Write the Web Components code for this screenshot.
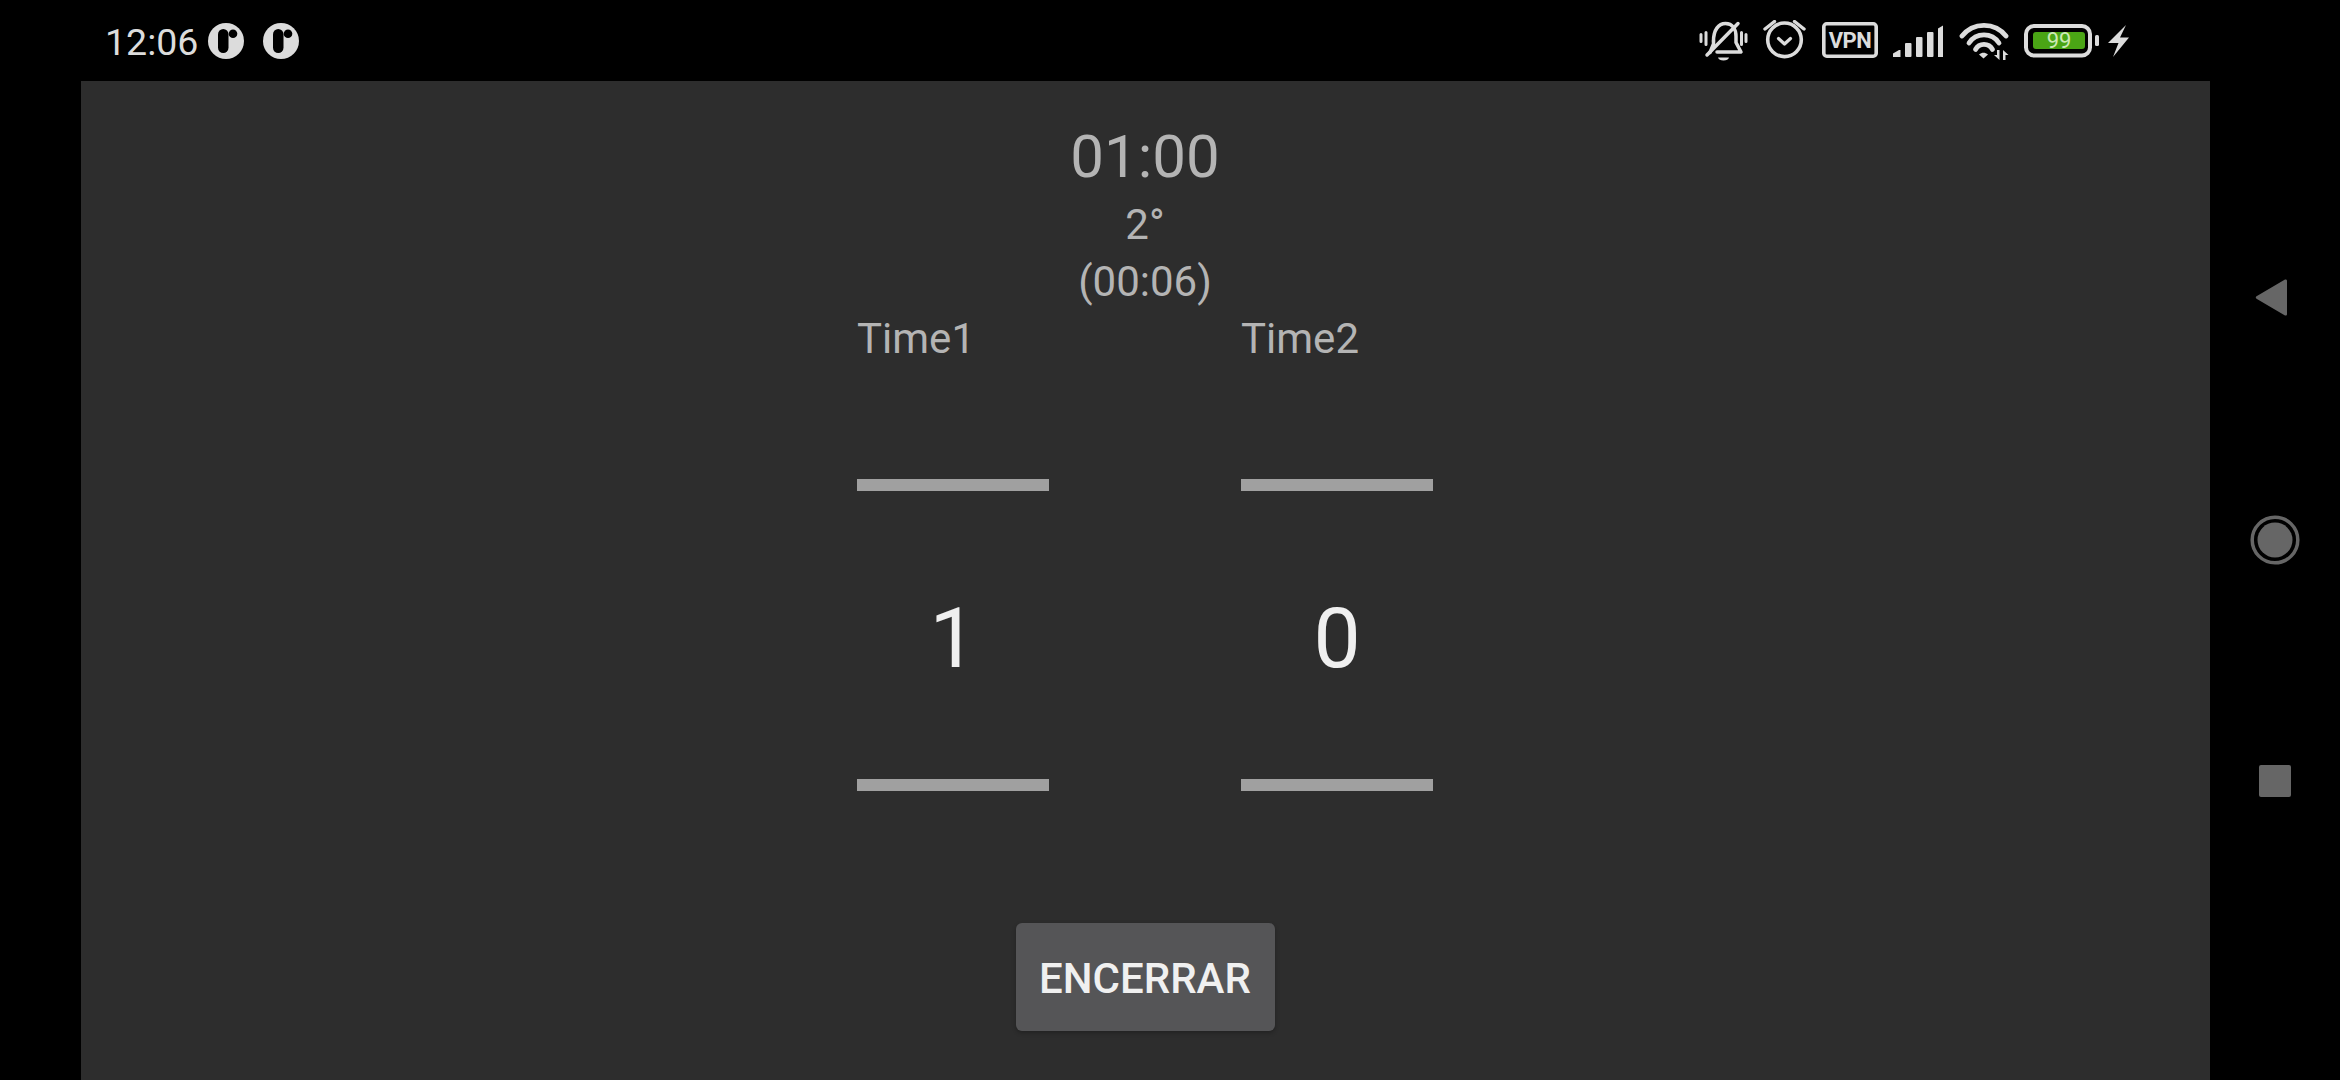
<!DOCTYPE html>
<html lang="pt">
<head>
<meta charset="utf-8">
<title>Placar</title>
<style>
  html, body { margin: 0; height: 100%; background: #000; overflow: hidden; }
  body { font-family: Roboto, "Liberation Sans", sans-serif; }
</style>
</head>
<body>
<phone-screen>
  <status-bar slot="top" time="12:06"></status-bar>
  <score-panel>
    <match-clock slot="clock" time="01:00" period="2°" elapsed="(00:06)"></match-clock>
    <team-score slot="teams" name="Time1" score="1"></team-score>
    <team-score slot="teams" name="Time2" score="0"></team-score>
    <action-button slot="action">ENCERRAR</action-button>
  </score-panel>
  <nav-rail slot="nav"></nav-rail>
</phone-screen>

<script>
(() => {
  class PhoneScreen extends HTMLElement {
    constructor() {
      super();
      this.attachShadow({mode: 'open'}).innerHTML = `
        <style>
          :host { display: flex; flex-direction: column; height: 1080px; width: 2340px; background: #000; }
          .body { flex: 1; display: flex; min-height: 0; padding-left: 81px; }
        </style>
        <slot name="top"></slot>
        <div class="body"><slot></slot><slot name="nav"></slot></div>`;
    }
  }

  class AppBadge extends HTMLElement {
    constructor() {
      super();
      this.attachShadow({mode: 'open'}).innerHTML = `
        <style>:host { display: block; width: 36px; height: 36px; } svg { display: block; }</style>
        <svg width="36" height="36" viewBox="0 0 36 36">
          <circle cx="18" cy="18" r="18" fill="#dcdcdc"/>
          <rect x="10" y="6" width="10.500" height="24" rx="5.250" fill="#000"/>
          <circle cx="25" cy="10.800" r="4.300" fill="#000"/>
        </svg>`;
    }
  }

  class StatusBar extends HTMLElement {
    constructor() {
      super();
      const t = this.getAttribute('time') || '';
      this.attachShadow({mode: 'open'}).innerHTML = `
        <style>
          :host { display: flex; justify-content: space-between; height: 81px; flex: none;
                  padding: 0 211px 0 105px; box-sizing: border-box; color: #dcdcdc; }
          .left { display: flex; align-items: flex-start; padding-top: 23px; }
          .time { font-size: 37.500px; line-height: 36px; width: 91px; margin-right: 12px; margin-top: 1px; white-space: nowrap; }
          app-badge + app-badge { margin-left: 19px; }
          .right { display: flex; align-items: flex-start; padding-top: 20px; }
          svg { display: block; height: 42px; margin-left: 15.5px; fill: none; stroke: #dcdcdc; }
          svg:first-child { margin-left: 0; }
          svg text { font-family: Roboto, "Liberation Sans", sans-serif; stroke: none; text-anchor: middle; }
        </style>
        <div class="left"><span class="time">${t}</span><app-badge></app-badge><app-badge></app-badge></div>
        <div class="right">
          <svg width="49" viewBox="1698 20 49 42" stroke-width="3.500" stroke-linecap="round" stroke-linejoin="round">
            <path d="M1700 34.500v7M1705 32.500v12M1745 34.500v7M1740.500 32.500v12" stroke-width="3"/>
            <path d="M1712.500 41c0-11 5-17.500 12-17.500 7 0 10.500 5.500 10.500 13v6l5 9.500h-24"/>
            <path d="M1712.500 41v3l-3.500 8.500"/>
            <path d="M1706 55l31-31.500"/>
            <path d="M1717 57.500h11c-.5 1.800-2.500 3-5.500 3s-5-1.200-5.500-3z" fill="#dcdcdc" stroke="none"/>
          </svg>
          <svg width="43" style="margin-left:15px" viewBox="1762 20 43 42" stroke-width="3.600" stroke-linecap="round" stroke-linejoin="round">
            <circle cx="1783.500" cy="39.800" r="16.800"/>
            <path d="M1777.500 38.500l6 5.500 6-5.500" stroke-width="3.200"/>
            <path d="M1764 29l9.500-7.500M1793.500 21.500l9.500 7.500" stroke-width="3.400"/>
          </svg>
          <svg width="56" viewBox="1821 20 56 42">
            <rect x="1822.800" y="23.800" width="52.400" height="32.400" rx="3" stroke-width="3.600"/>
            <text x="1849" y="48" font-size="22" font-weight="700" fill="#dcdcdc" letter-spacing="-.5">VPN</text>
          </svg>
          <svg width="50" viewBox="1893 20 50 42" style="fill:#dcdcdc;stroke:none">
            <path d="M1893 57v-3.500l6-3.500h1.500v7z"/>
            <rect x="1905" y="43" width="6.500" height="14" rx="1"/>
            <rect x="1916" y="37" width="6.500" height="20" rx="1"/>
            <rect x="1927" y="32" width="6.500" height="25" rx="1"/>
            <path d="M1938 28.500l6-3.500v32h-6z"/>
          </svg>
          <svg width="50" viewBox="1958 20 50 42" stroke-width="4.800" stroke-linecap="round">
            <path d="M1961 36A28 28 0 0 1 2005 36"/>
            <path d="M1968 43A18 18 0 0 1 1998 43"/>
            <path d="M1974.500 49.500A9.700 9.700 0 0 1 1991.500 49.500"/>
            <path d="M1978 54.500c3-2.500 6-2.500 9 0l-4.500 4z" fill="#dcdcdc" stroke="none" stroke-linejoin="round"/>
            <path d="M1998.500 50v10l-5.500-5h3v-5zM2002 50l5.500 5h-3v5h-2.500z" fill="#dcdcdc" stroke="none"/>
          </svg>
          <svg width="75" viewBox="2024 20 75 42">
            <rect x="2026" y="26" width="64" height="29.500" rx="8" stroke-width="4"/>
            <rect x="2033" y="32" width="52" height="17" rx="3" fill="#4aa515" stroke="none"/>
            <text x="2059" y="48" font-size="22" fill="#cdeab5">99</text>
            <rect x="2095" y="35" width="4" height="11" rx="1.500" fill="#dcdcdc" stroke="none"/>
          </svg>
          <svg width="21" style="margin-left:9px" viewBox="2108 20 21 42">
            <path d="M2126 25l-18 18h10.500l-5.500 14 16-19.500h-9z" fill="#dcdcdc" stroke="none"/>
          </svg>
        </div>`;
    }
  }

  class MatchClock extends HTMLElement {
    constructor() {
      super();
      const attr = n => this.getAttribute(n) || '';
      this.attachShadow({mode: 'open'}).innerHTML = `
        <style>
          :host { display: flex; flex-direction: column; align-items: center; color: #b4b4b4; padding-top: 36px; }
          div { white-space: nowrap; }
          .time { font-size: 60px; line-height: 79px; }
          .line { font-size: 42px; line-height: 57px; }
        </style>
        <div class="time">${attr('time')}</div>
        <div class="line">${attr('period')}</div>
        <div class="line">${attr('elapsed')}</div>`;
    }
  }

  class TeamScore extends HTMLElement {
    constructor() {
      super();
      const attr = n => this.getAttribute(n) || '';
      this.attachShadow({mode: 'open'}).innerHTML = `
        <style>
          :host { display: block; width: 192px; }
          .name { font-size: 42px; line-height: 57px; color: #b4b4b4; white-space: nowrap; }
          .bar { height: 12px; background: #a0a0a0; }
          .top { margin-top: 112px; }
          .score { font-size: 84px; line-height: 280px; padding-top: 8px; text-align: center; color: #efefef; }
        </style>
        <div class="name">${attr('name')}</div>
        <div class="bar top"></div>
        <div class="score">${attr('score')}</div>
        <div class="bar"></div>`;
    }
  }

  class ActionButton extends HTMLElement {
    constructor() {
      super();
      this.attachShadow({mode: 'open'}).innerHTML = `
        <style>
          :host { display: flex; align-items: center; justify-content: center; width: 259px; height: 108px;
                  box-sizing: border-box; padding-top: 3px; background: #555557; border-radius: 6px;
                  box-shadow: 0 2px 4px rgba(0,0,0,.25); color: #f0f0f0; cursor: pointer; }
          span { font-size: 42px; font-weight: 500; line-height: 50px; white-space: nowrap; }
        </style>
        <span><slot></slot></span>`;
    }
  }

  class ScorePanel extends HTMLElement {
    constructor() {
      super();
      this.attachShadow({mode: 'open'}).innerHTML = `
        <style>
          :host { display: flex; flex-direction: column; align-items: center; flex: 1; min-width: 0;
                  box-sizing: border-box; padding-right: 1px; background: #2d2d2d; }
          .teams { display: flex; gap: 192px; }
          .action { margin-top: 132px; }
        </style>
        <slot name="clock"></slot>
        <div class="teams"><slot name="teams"></slot></div>
        <div class="action"><slot name="action"></slot></div>`;
    }
  }

  class NavRail extends HTMLElement {
    constructor() {
      super();
      this.attachShadow({mode: 'open'}).innerHTML = `
        <style>
          :host { display: flex; flex-direction: column; align-items: center; gap: 192px; width: 130px; flex: none; padding-top: 192px; box-sizing: border-box; }
          svg { display: block; fill: #666; }
        </style>
        <svg width="50" height="50" viewBox="0 0 50 50"><path d="M6.500 23.300 35 6.600c1-.6 2 .1 2 1.200v33.400c0 1.100-1 1.800-2 1.200L6.500 25.700c-1-.6-1-1.800 0-2.400z"/></svg>
        <svg width="50" height="50" viewBox="0 0 50 50"><circle cx="25" cy="25" r="22.800" fill="none" stroke="#666" stroke-width="3.500"/><circle cx="25" cy="25" r="17.500"/></svg>
        <svg width="50" height="50" viewBox="0 0 50 50"><rect x="9" y="8" width="32" height="32" rx="2"/></svg>`;
    }
  }

  customElements.define('app-badge', AppBadge);
  customElements.define('status-bar', StatusBar);
  customElements.define('match-clock', MatchClock);
  customElements.define('team-score', TeamScore);
  customElements.define('action-button', ActionButton);
  customElements.define('score-panel', ScorePanel);
  customElements.define('nav-rail', NavRail);
  customElements.define('phone-screen', PhoneScreen);
})();
</script>
</body>
</html>
